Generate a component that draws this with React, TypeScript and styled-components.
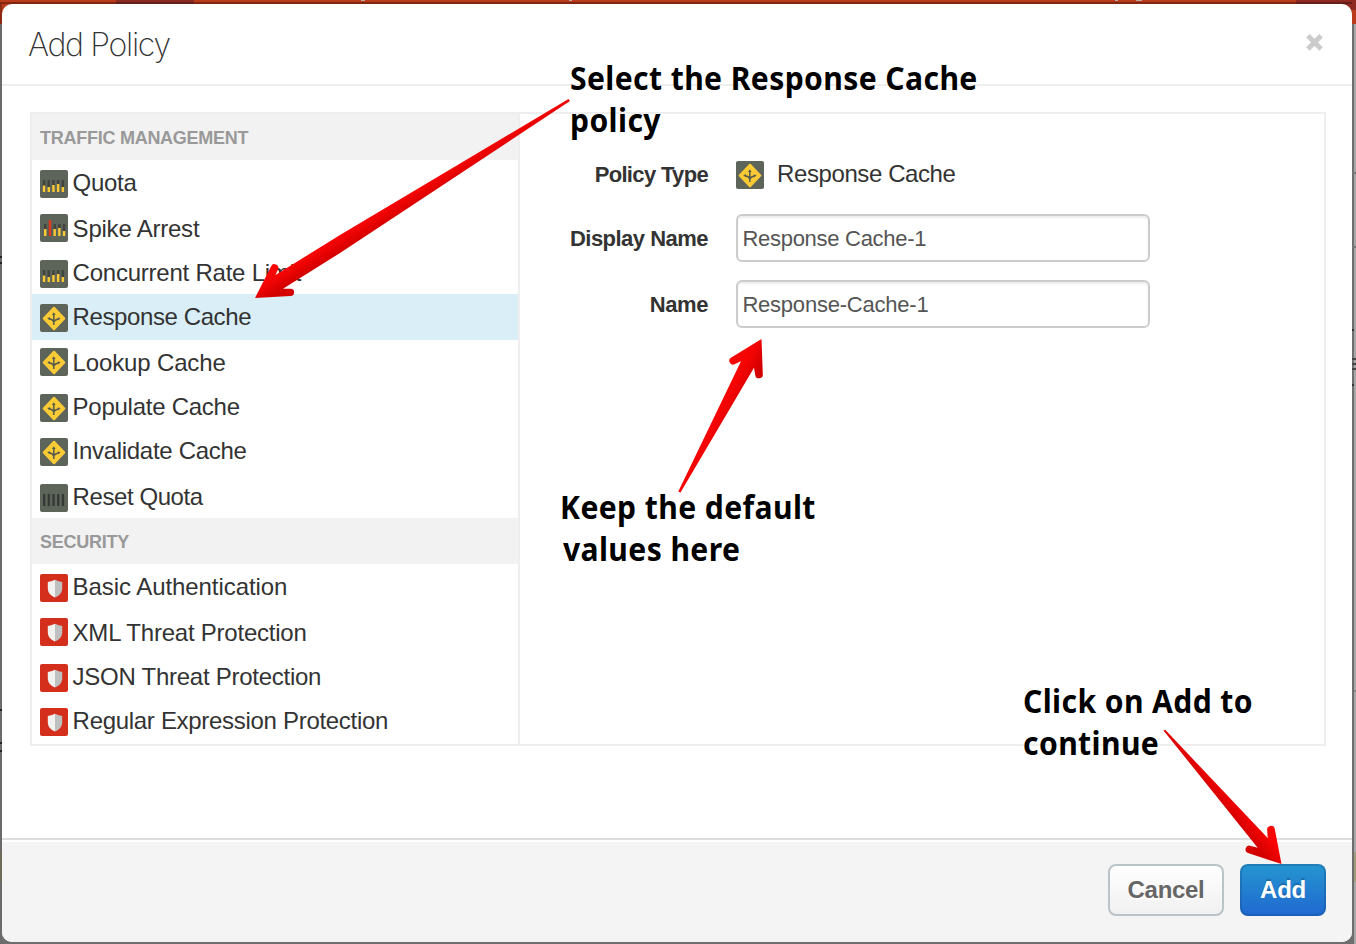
import React from "react";
import styled, { createGlobalStyle } from "styled-components";

const Global = createGlobalStyle`
  *{box-sizing:border-box}
  html,body{margin:0;padding:0;height:944px;overflow:hidden}
  body{font-family:"Liberation Sans",Arial,sans-serif;color:#333;background:#8f8f8f}
`;

const Page = styled.div`
  position:relative;width:1356px;height:944px;padding:4px 4px 2px 2px;overflow:hidden;
  background:
    linear-gradient(90deg,#b9aaa2 0 0) 361px 0/4px 1px no-repeat,
    linear-gradient(90deg,#b9aaa2 0 0) 569px 0/3px 1px no-repeat,
    linear-gradient(90deg,#b9aaa2 0 0) 1115px 0/3px 1px no-repeat,
    linear-gradient(90deg,#b9aaa2 0 0) 1136px 0/6px 1px no-repeat,
    linear-gradient(90deg,#5e211b 0 0) 116px 2px/78px 2px no-repeat,
    linear-gradient(90deg,#8e2a22 0 0) 116px 0/78px 2px no-repeat,
    linear-gradient(90deg,#641d1a 0 0) 1296px 2px/56px 2px no-repeat,
    linear-gradient(90deg,#8e2a22 0 0) 1296px 0/60px 10px no-repeat,
    linear-gradient(90deg,#812711 0 0) 0 2px/1352px 2px no-repeat,
    linear-gradient(90deg,#8c2a13 0 0) 0 4px/2px 20px no-repeat,
    linear-gradient(90deg,#ba3b1c 0 0) 0 0/1356px 24px no-repeat,
    linear-gradient(90deg,#6f6b58 0 0) 0 852px/2px 30px no-repeat,
    linear-gradient(90deg,#222 0 0) 0 256px/2px 2px no-repeat,
    linear-gradient(90deg,#222 0 0) 0 262px/2px 2px no-repeat,
    linear-gradient(90deg,#222 0 0) 0 709px/2px 2px no-repeat,
    linear-gradient(90deg,#222 0 0) 0 742px/2px 2px no-repeat,
    linear-gradient(90deg,#222 0 0) 0 750px/2px 2px no-repeat,
    linear-gradient(90deg,#6b6b6b 0 0) 0 24px/2px 920px no-repeat,
    linear-gradient(90deg,#a19d7c 0 0) 1354px 852px/2px 30px no-repeat,
    linear-gradient(90deg,#777 0 0) 1352px 172px/4px 2px no-repeat,
    linear-gradient(90deg,#777 0 0) 1352px 246px/4px 2px no-repeat,
    linear-gradient(90deg,#333 0 0) 1352px 329px/2px 2px no-repeat,
    linear-gradient(90deg,#444 0 0) 1352px 358px/4px 2px no-repeat,
    linear-gradient(90deg,#444 0 0) 1352px 363px/4px 2px no-repeat,
    linear-gradient(90deg,#444 0 0) 1352px 368px/4px 2px no-repeat,
    linear-gradient(90deg,#333 0 0) 1352px 384px/2px 2px no-repeat,
    linear-gradient(90deg,#888 0 0) 1354px 690px/2px 2px no-repeat,
    linear-gradient(90deg,#6e6e6e 0 50%,#a8a8a8 50%) 1352px 24px/4px 920px no-repeat,
    #6e6e6e;
`;
const Modal = styled.section`
  height:938px;width:1350px;background:#fff;border-radius:10px;overflow:hidden;display:flex;flex-direction:column;
`;
const Header = styled.header`
  height:82px;flex:none;border-bottom:2px solid #eee;display:flex;justify-content:space-between;align-items:flex-start;padding:20px 28px 0 26px;
`;
const Title = styled.h1`
  margin:0;font:250 32px/42px Inter,sans-serif;letter-spacing:-1.3px;color:#333;white-space:nowrap;
`;
const Close = styled.button`
  border:0;background:none;padding:0;margin-top:9px;width:20px;height:20px;display:block;
  svg{display:block}
`;
const Body = styled.div`flex:1;padding:26px 26px 0 28px;`;
const Panel = styled.div`height:634px;border:2px solid #eee;display:flex;`;
const List = styled.div`width:488px;border-right:2px solid #eee;`;
const Group = styled.div`
  height:46px;background:#f2f2f2;color:#999;font-weight:700;font-size:18px;line-height:48px;padding-left:8px;white-space:nowrap;letter-spacing:-.26px;
`;
const Row = styled.div<{ $h: number; $on?: boolean }>`
  height:${p => p.$h}px;background:${p => (p.$on ? "#d9eef7" : "transparent")};display:flex;align-items:flex-start;padding-left:8px;
`;
const IconBox = styled.span<{ $top: number }>`
  width:28px;height:28px;margin-top:${p => p.$top}px;margin-right:4.6px;flex:none;
  svg{display:block}
`;
const Label = styled.span<{ $top: number; $ls?: number }>`
  margin-top:${p => p.$top}px;font-size:24px;line-height:28px;white-space:nowrap;letter-spacing:${p => p.$ls || 0}px;
`;
const Form = styled.div`flex:1;padding:46px 0 0 48px;`;
const Field = styled.div<{ $h: number }>`display:flex;height:${p => p.$h}px;`;
const FieldName = styled.label<{ $top: number; $ls?: number }>`
  width:140px;text-align:right;font-size:22px;font-weight:700;line-height:28px;margin-top:${p => p.$top}px;white-space:nowrap;letter-spacing:${p => p.$ls ?? -0.4}px;
`;
const Value = styled.div`
  display:flex;margin-left:28px;
  ${IconBox}{margin-right:13px}
`;
const Input = styled.div<{ $ls?: number }>`
  margin-left:28px;width:414px;height:48px;border:2px solid #ccc;border-radius:6px;padding-left:4.4px;font-size:22px;line-height:45px;color:#555;
  box-shadow:inset 0 2px 2px rgba(0,0,0,.075);letter-spacing:${p => p.$ls || 0}px;
`;
const Footer = styled.footer`
  height:104px;flex:none;border-top:2px solid #ddd;box-shadow:inset 0 2px 0 #fff;background:#f4f4f4;display:flex;justify-content:flex-end;padding:24px 26px 0;gap:16px;
`;
const Button = styled.button<{ $primary?: boolean }>`
  width:${p => (p.$primary ? 86 : 116)}px;height:52px;padding:0;border-radius:8px;
  border:2px solid ${p => (p.$primary ? "rgba(20,80,140,.35)" : "#b9c3c8")};
  background:${p => (p.$primary ? "linear-gradient(#2596d0,#2068d0)" : "linear-gradient(#fff,#f0f0f0)")};
  background-clip:border-box;background-origin:border-box;
  font:700 24px/46px "Liberation Sans",Arial,sans-serif;color:${p => (p.$primary ? "#fff" : "#666")};
  text-shadow:${p => (p.$primary ? "0 -2px 0 rgba(0,0,0,.2)" : "0 2px 2px #fff")};
  letter-spacing:-.3px;
`;
const Note = styled.div<{ $x: number; $y: number }>`
  position:absolute;left:${p => p.$x}px;top:${p => p.$y}px;font:700 32px/42px "Noto Sans",sans-serif;color:#000;white-space:pre;
  letter-spacing:.43px;transform-origin:0 0;transform:scaleX(.94);
`;
const Arrows = styled.svg`position:absolute;left:0;top:0;pointer-events:none;`;

type Kind = "bars" | "spike" | "cache" | "reset" | "shield";

function PolicyIcon({ kind }: { kind: Kind }) {
  const spike = kind === "spike";
  const heights = spike ? [7, 16, 7, 8, 5] : [6.5, 5, 7, 8, 5];
  const left = spike ? 4 : 2.8;
  return (
    <svg width="28" height="28" viewBox="0 0 28 28">
      <rect width="28" height="28" rx="2" fill={kind === "shield" ? "#d32f1c" : "#5d645a"} />
      {(kind === "bars" || spike) &&
        heights.map((h, i) => (
          <g key={i}>
            <rect x={left + i * 4.7} y={10} width="2.5" height="12" fill="#41443f" />
            <rect x={left + i * 4.7} y={22 - h} width="2.5" height={h} rx=".5" fill={spike && i === 1 ? "#e03a20" : "#fbc937"} />
          </g>
        ))}
      {kind === "reset" && [0, 1, 2, 3, 4].map(i => <rect key={i} x={3 + i * 4.7} y="10" width="2.3" height="12" fill="#353835" />)}
      {kind === "cache" && (
        <>
          <path d="M14 3.8 24.2 14.5 14 25.2 3.8 14.5Z" fill="#fbcb36" stroke="#fbcb36" strokeWidth="2.2" strokeLinejoin="round" />
          <path d="M13.8 21V10M13.8 18Q13 15.6 9 14.8M13.8 18Q14.6 15.8 18.6 15" fill="none" stroke="#565b4c" strokeWidth="1.5" />
          <path d="M13.8 8.2 15.7 11H11.9ZM7.2 14 10.2 13.2 9.4 16.2ZM20.6 14 17.6 13.4 18.5 16.4Z" fill="#565b4c" />
        </>
      )}
      {kind === "shield" && (
        <>
          <path d="M15 5.8Q11 7.8 7.8 8V15Q8.3 20.8 15 23.6Z" fill="#f2f2f0" />
          <path d="M15 5.8Q19 7.8 22.2 8V15Q21.7 20.8 15 23.6Z" fill="#bfc1c0" />
        </>
      )}
    </svg>
  );
}

type Item = { name: string; kind: Kind; h: number; icon?: number; text?: number; ls?: number; on?: boolean };
const traffic: Item[] = [
  { name: "Quota", kind: "bars", h: 44, ls: -0.3 },
  { name: "Spike Arrest", kind: "spike", h: 46, text: 11, ls: -0.22 },
  { name: "Concurrent Rate Limit", kind: "bars", h: 44, ls: -0.23 },
  { name: "Response Cache", kind: "cache", h: 46, on: true, ls: -0.4 },
  { name: "Lookup Cache", kind: "cache", h: 44, icon: 8, ls: -0.15 },
  { name: "Populate Cache", kind: "cache", h: 44, ls: -0.26 },
  { name: "Invalidate Cache", kind: "cache", h: 46, ls: -0.3 },
  { name: "Reset Quota", kind: "reset", h: 44, ls: -0.42 },
];
const security: Item[] = [
  { name: "Basic Authentication", kind: "shield", h: 44, ls: -0.07 },
  { name: "XML Threat Protection", kind: "shield", h: 46, text: 11, ls: -0.23 },
  { name: "JSON Threat Protection", kind: "shield", h: 44, ls: -0.26 },
  { name: "Regular Expression Protection", kind: "shield", h: 46, ls: -0.3 },
];

const Items = ({ items }: { items: Item[] }) => (
  <>
    {items.map(i => (
      <Row key={i.name} $h={i.h} $on={i.on}>
        <IconBox $top={i.icon ?? 10}><PolicyIcon kind={i.kind} /></IconBox>
        <Label $top={i.text ?? 9} $ls={i.ls}>{i.name}</Label>
      </Row>
    ))}
  </>
);

export default function App() {
  return (
    <Page>
      <Global />
      <Modal>
        <Header>
          <Title>Add Policy</Title>
          <Close aria-label="Close">
            <svg width="20" height="20" viewBox="0 0 20 20"><path d="M3.9 2.8 17.1 16M17.1 2.8 3.9 16" stroke="#ccc" strokeWidth="5" /></svg>
          </Close>
        </Header>
        <Body>
          <Panel>
            <List>
              <Group>TRAFFIC MANAGEMENT</Group>
              <Items items={traffic} />
              <Group>SECURITY</Group>
              <Items items={security} />
            </List>
            <Form>
              <Field $h={54}>
                <FieldName $top={1} $ls={-0.66}>Policy Type</FieldName>
                <Value>
                  <IconBox $top={1}><PolicyIcon kind="cache" /></IconBox>
                  <Label $top={0} $ls={-0.4}>Response Cache</Label>
                </Value>
              </Field>
              <Field $h={66}>
                <FieldName $top={11} $ls={-0.52}>Display Name</FieldName>
                <Input $ls={-0.28}>Response Cache-1</Input>
              </Field>
              <Field $h={66}>
                <FieldName $top={11}>Name</FieldName>
                <Input $ls={-0.22}>Response-Cache-1</Input>
              </Field>
            </Form>
          </Panel>
        </Body>
        <Footer>
          <Button>Cancel</Button>
          <Button $primary>Add</Button>
        </Footer>
      </Modal>
      <Arrows width="1356" height="944" viewBox="0 0 1356 944">
        <defs>
          <linearGradient id="a1" gradientUnits="userSpaceOnUse" x1="340" y1="235" x2="348" y2="248"><stop offset="0" stopColor="#fa0505" /><stop offset="1" stopColor="#d40000" /></linearGradient>
          <linearGradient id="a2" gradientUnits="userSpaceOnUse" x1="734" y1="385" x2="748" y2="392"><stop offset="0" stopColor="#f60404" /><stop offset="1" stopColor="#d40000" /></linearGradient>
          <linearGradient id="a3" gradientUnits="userSpaceOnUse" x1="1243" y1="805" x2="1230" y2="816"><stop offset="0" stopColor="#fa0505" /><stop offset="1" stopColor="#d40000" /></linearGradient>
        </defs>
        <path fill="url(#a1)" d="M568.5 99 570 101 340 253 283 288.7H290.5A3.6 3.6 0 0 1 290.5 296L255 298 271 266.5A3.7 3.7 0 0 1 278 269.5L275.5 275 340 235Z" />
        <path fill="url(#a2)" d="M678.3 491.5 741 361.3 734.5 364.3A3.8 3.8 0 0 1 730.5 358L761.5 339 762.8 374A3.8 3.8 0 0 1 755.2 375L754 367.7 680.5 492.5Z" />
        <path fill="url(#a3)" d="M1163.5 730.5 1165.2 729.8 1267.7 838 1267.2 830.5A3.8 3.8 0 0 1 1274.8 829L1281.5 864 1248 853A3.8 3.8 0 0 1 1250 845.7L1257.7 847.7Z" />
      </Arrows>
      <Note $x={570} $y={57}>{"Select the Response Cache\npolicy"}</Note>
      <Note $x={560} $y={486}>{"Keep the default"}</Note>
      <Note $x={563} $y={528}>{"values here"}</Note>
      <Note $x={1023} $y={680}>{"Click on Add to\ncontinue"}</Note>
    </Page>
  );
}
